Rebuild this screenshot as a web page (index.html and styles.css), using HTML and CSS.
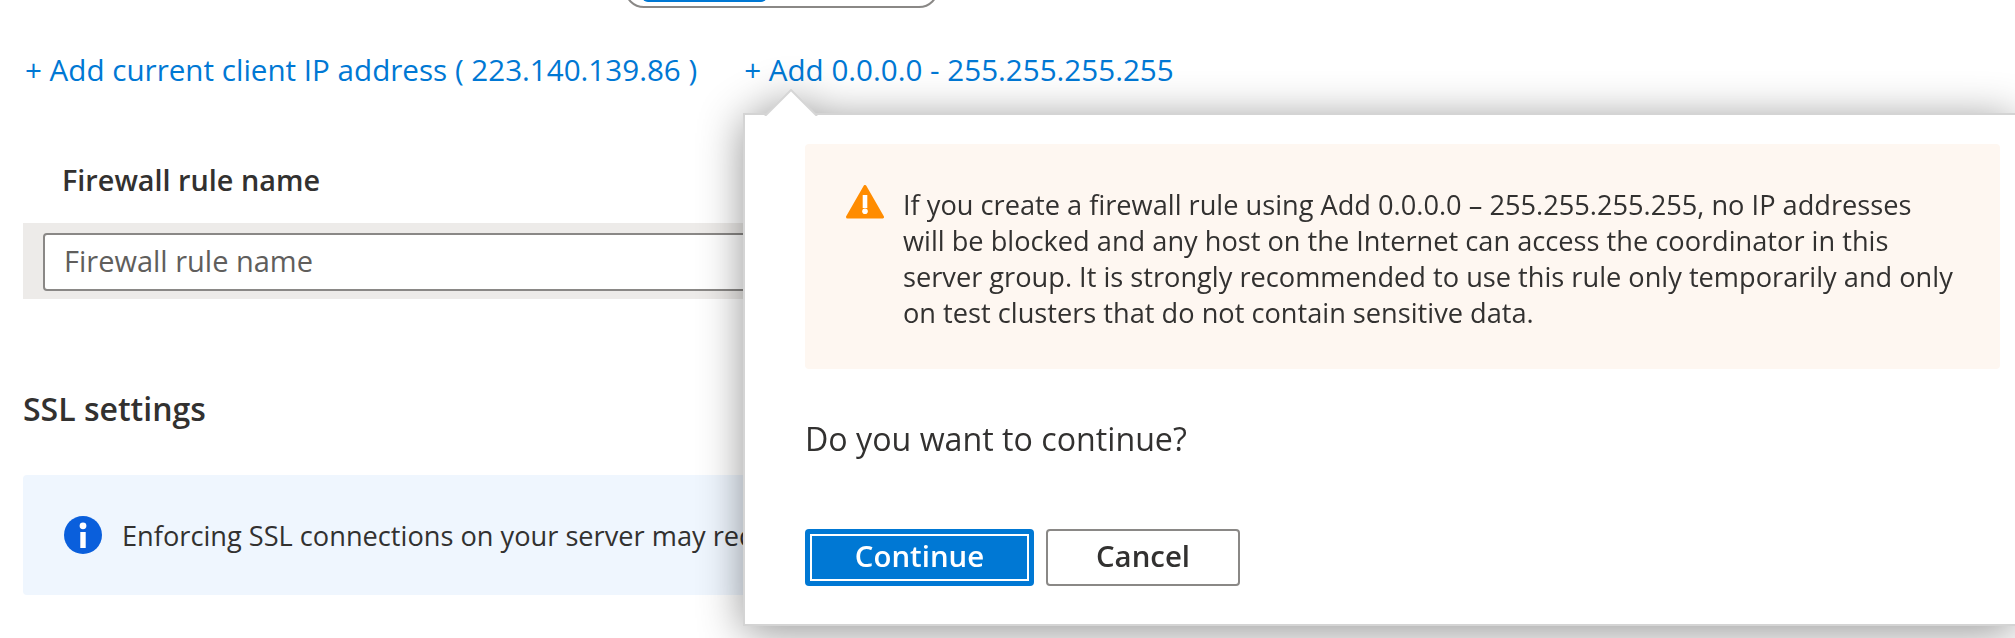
FILE: index.html
```html
<!DOCTYPE html>
<html lang="en">
<head>
<meta charset="utf-8">
<title>Firewall rules</title>
<link rel="stylesheet" href="styles.css">
</head>
<body>
<main class="page">
  <div class="toggle-clip">
    <div class="toggle"><span class="toggle-on"></span></div>
  </div>
  <div class="links">
    <a class="link" href="#">+ Add current client IP address ( 223.140.139.86 )</a>
    <a class="link" href="#">+ Add 0.0.0.0 - 255.255.255.255</a>
  </div>
  <div class="rule-label">Firewall rule name</div>
  <div class="rule-row">
    <input class="rule-input" type="text" placeholder="Firewall rule name">
  </div>
  <h2 class="section-title">SSL settings</h2>
  <div class="info-box">
    <svg class="info-icon" viewBox="0 0 38 38" aria-hidden="true">
      <circle cx="19" cy="19" r="19" fill="#0a5fdc"/>
      <circle cx="19" cy="9.8" r="3.4" fill="#fff"/>
      <rect x="16.3" y="16" width="5.4" height="16" fill="#fff"/>
    </svg>
    <span>Enforcing SSL connections on your server may require additional configuration</span>
  </div>
</main>
<aside class="popover">
  <svg class="beak" viewBox="0 0 54 27" aria-hidden="true">
    <polygon points="27,1 53,27 1,27" fill="#fff"/>
    <polyline points="1,27 27,1 53,27" fill="none" stroke="#d6d6d6" stroke-width="2"/>
  </svg>
  <div class="panel">
    <div class="warn-box">
      <svg class="warn-icon" viewBox="0 0 38 34" aria-hidden="true">
        <path d="M19 1.5 L36.5 32 H1.5 Z" fill="#ff8c00" stroke="#ff8c00" stroke-width="3" stroke-linejoin="round"/>
        <rect x="16.7" y="10" width="4.6" height="13" fill="#fff"/>
        <circle cx="19" cy="26.3" r="2.8" fill="#fff"/>
      </svg>
      <p class="warn-text">If you create a firewall rule using Add 0.0.0.0 – 255.255.255.255, no IP addresses<br>will be blocked and any host on the Internet can access the coordinator in this<br>server group. It is strongly recommended to use this rule only temporarily and only<br>on test clusters that do not contain sensitive data.</p>
    </div>
    <p class="question">Do you want to continue?</p>
    <div class="actions">
      <button class="btn btn-primary" type="button">Continue</button>
      <button class="btn btn-default" type="button">Cancel</button>
    </div>
  </div>
</aside>
</body>
</html>
```
FILE: styles.css
```css
html, body {
  margin: 0;
  height: 638px;
  overflow: hidden;
  background: #fff;
}
body {
  position: relative;
  font-family: "Open Sans", "Noto Sans", sans-serif;
  font-size: 27.2px;
  color: #323130;
}
.page {
  display: flex;
  flex-direction: column;
  align-items: flex-start;
}
.toggle-clip {
  width: 315px;
  height: 8px;
  margin-left: 624px;
  overflow: hidden;
}
.toggle {
  box-sizing: border-box;
  display: flex;
  align-items: flex-end;
  height: 48px;
  margin-top: -40px;
  padding: 0 0 4px 16px;
  border: 2px solid #8a8886;
  border-radius: 20px;
}
.toggle-on {
  display: block;
  width: 125px;
  height: 30px;
  background: #0078d4;
  border-radius: 6px;
}
.links {
  display: flex;
  gap: 47px;
  margin: 44px 0 0 25px;
  line-height: 36px;
  font-size: 29.6px;
}
.link {
  color: #0078d4;
  text-decoration: none;
  white-space: nowrap;
}
.rule-label {
  margin: 74px 0 0 62px;
  line-height: 36px;
  font-size: 28.8px;
  font-weight: 600;
}
.rule-row {
  box-sizing: border-box;
  width: 720px;
  height: 76px;
  margin: 25px 0 0 23px;
  padding: 10px 0 8px 20px;
  background: #edebe9;
  overflow: hidden;
}
.rule-input {
  box-sizing: border-box;
  display: block;
  width: 900px;
  height: 58px;
  padding: 0 19px 4px;
  border: 2px solid #8a8886;
  border-radius: 4px;
  background: #fff;
  font: inherit;
  font-size: 29px;
  color: #323130;
}
.rule-input::placeholder {
  color: #605e5c;
  opacity: 1;
}
.section-title {
  margin: 90px 0 1px 23px;
  line-height: 40px;
  font-size: 32px;
  font-weight: 600;
}
.info-box {
  box-sizing: border-box;
  display: flex;
  align-items: center;
  gap: 20px;
  width: 720px;
  height: 120px;
  margin: 45px 0 0 23px;
  padding-left: 41px;
  border-radius: 4px 0 0 4px;
  background: #eff6fe;
  white-space: nowrap;
  overflow: hidden;
}
.info-icon {
  flex: none;
  width: 38px;
  height: 38px;
}
.popover {
  position: absolute;
  left: 743px;
  top: 89px;
  right: 0;
  filter: drop-shadow(0 6px 22px rgba(0, 0, 0, .42));
}
.beak {
  position: relative;
  z-index: 1;
  display: block;
  width: 54px;
  height: 27px;
  margin: 0 0 -3px 21px;
}
.panel {
  box-sizing: border-box;
  height: 513px;
  padding: 29px 15px 0 60px;
  border: 2px solid #d4d4d4;
  border-right: 0;
  background: #fff;
}
.warn-box {
  box-sizing: border-box;
  display: flex;
  align-items: flex-start;
  gap: 19px;
  height: 225px;
  padding: 41px 0 0 41px;
  border-radius: 4px;
  background: #fef7f1;
}
.warn-icon {
  flex: none;
  width: 38px;
  height: 34px;
}
.warn-text {
  margin: 2px 0 0;
  line-height: 36px;
  white-space: nowrap;
}
.question {
  margin: 50px 0 1px;
  line-height: 40px;
  font-size: 32.2px;
}
.actions {
  display: flex;
  gap: 12px;
  margin-top: 70px;
}
.btn {
  box-sizing: border-box;
  height: 57px;
  padding: 0 0 3px;
  border-radius: 4px;
  font: inherit;
  font-size: 29.4px;
  font-weight: 600;
}
.btn-primary {
  width: 229px;
  border: 0;
  background: #0078d4;
  color: #fff;
  outline: 2px solid #fff;
  outline-offset: -7px;
}
.btn-default {
  width: 194px;
  border: 2px solid #8a8886;
  background: #fff;
  color: #323130;
}
```
